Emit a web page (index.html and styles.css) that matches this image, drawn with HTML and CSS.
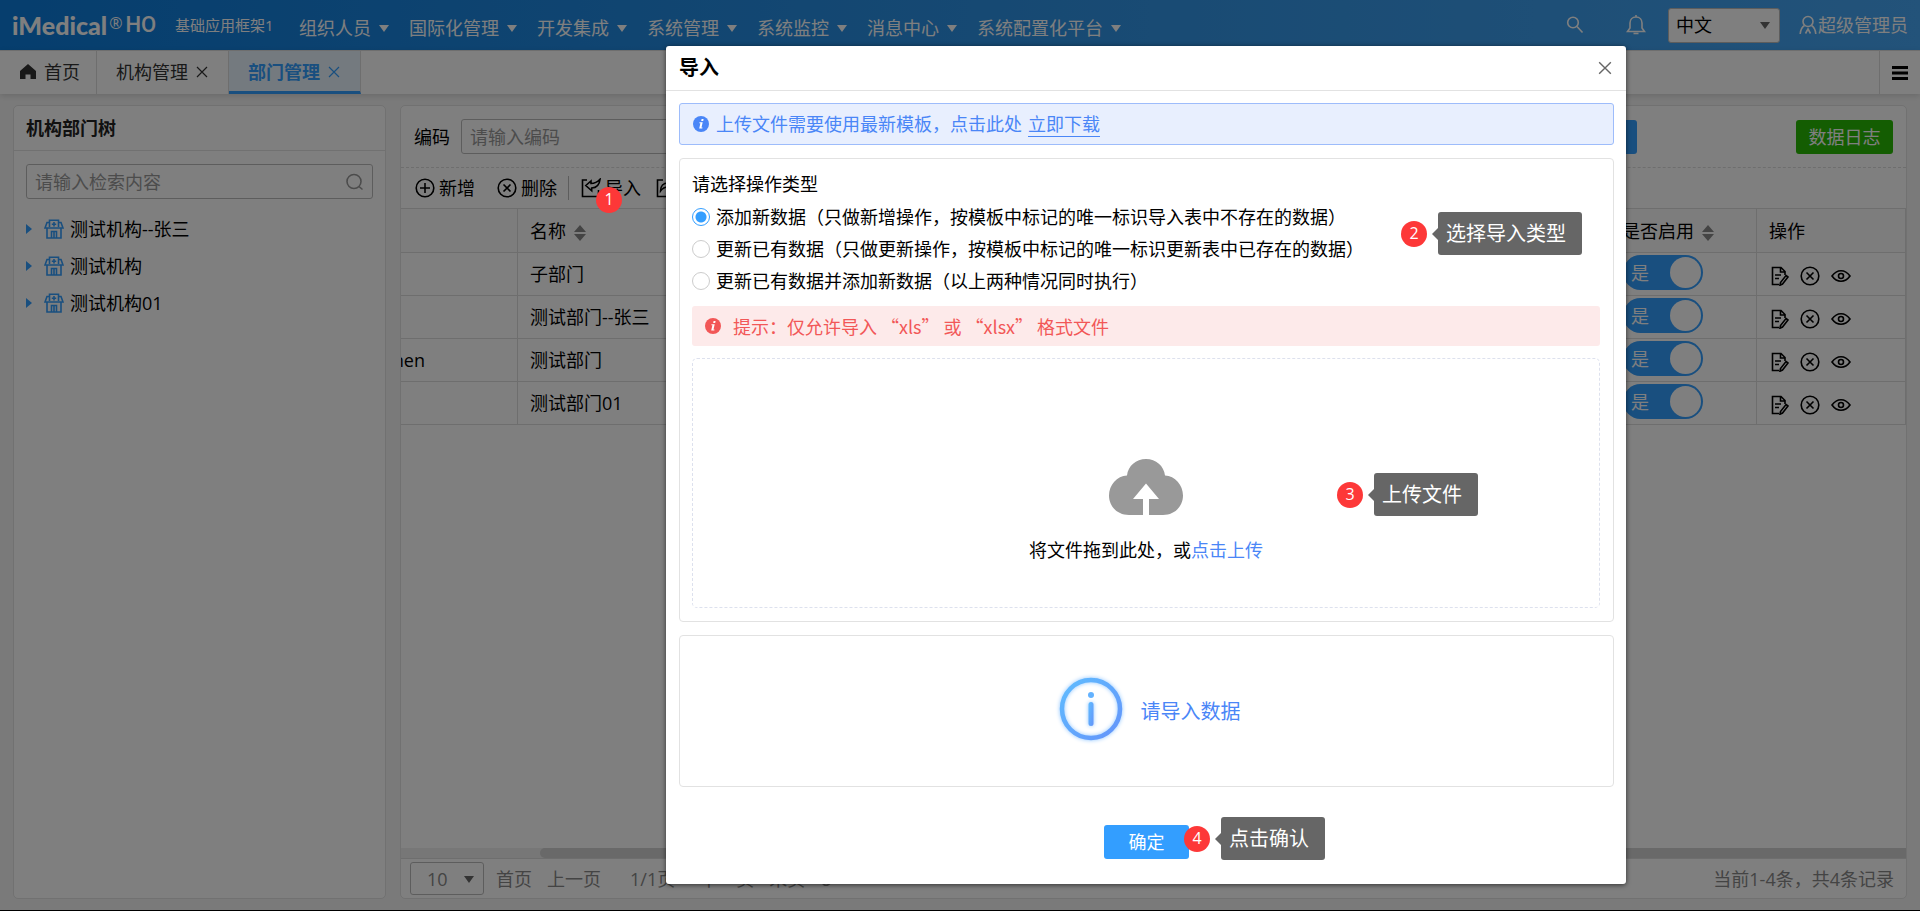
FILE: index.html
```html
<!DOCTYPE html>
<html lang="zh-CN">
<head>
<meta charset="utf-8">
<title>部门管理</title>
<link rel="stylesheet" href="styles.css">
</head>
<body>
<svg class="sprite" aria-hidden="true">
  <symbol id="i-plus" viewBox="0 0 20 20"><circle cx="10" cy="10" r="8.8"/><path d="M10 5v10M5 10h10"/></symbol>
  <symbol id="i-cancel" viewBox="0 0 20 20"><circle cx="10" cy="10" r="8.8"/><path d="M6.5 6.5l7 7M13.5 6.5l-7 7"/></symbol>
  <symbol id="i-import" viewBox="0 0 20 20"><path d="M6 2H1.500v16.500H17.500V12"/><path d="M4.800 7.500L10 3v2.500c3.500 0 6.300-1.200 9-4.200-.5 5-3.500 8.400-8.300 8.700v2.800z"/></symbol>
  <symbol id="i-export" viewBox="0 0 20 20"><path d="M7 2H1.500v16.500H17.500V12"/><path d="M4.500 13c0-5 3-8 7.500-8V1.500L18.500 7 12 12V9c-3 0-5.500 1.200-7.500 4z"/></symbol>
  <symbol id="i-edit" viewBox="0 0 18 20"><path d="M8 18.500H1.500V1.500h8.500l4 4v3.500M9.500 1.500V6H14M4 9h6M4 12.500h4"/><path d="M15 9.500l2 1.500-5.500 7-2.500 1.200.5-2.700z"/></symbol>
  <symbol id="i-eye" viewBox="0 0 20 20"><path d="M1 10c5-7 13-7 18 0-5 7-13 7-18 0z"/><circle cx="10" cy="10" r="2.500"/></symbol>
  <symbol id="i-org" viewBox="0 0 20 20"><path d="M5.500 8V1.200h9V8M5.500 3.500H3L1 9h18l-2-5.500h-2.500M3 9v10h14V9M7.500 19v-6.500h5V19M10 12.500V19M10 3v4.500M7.800 5.200h4.400"/></symbol>
  <symbol id="i-close" viewBox="0 0 12 12"><path d="M1 1l10 10M11 1L1 11"/></symbol>
  <symbol id="i-sort" viewBox="0 0 12 16"><path d="M6 0l6 7H0zM6 16l6-7H0z"/></symbol>
  <symbol id="i-info" viewBox="0 0 16 16"><circle cx="8" cy="8" r="8"/><path class="mark" d="M8.600 3h2l-.4 1.900h-2zM6.500 6.300h3.200l-1.200 5.200h1l-.2 1H6.200l1.200-5.200h-1.100z"/></symbol>
</svg>

<header class="topbar">
  <div class="brand"><span class="logo">iMedical</span><sup class="reg">®</sup><span class="ho">HO</span></div>
  <span class="framework">基础应用框架1</span>
  <nav class="menu">
    <a href="#">组织人员</a><a href="#">国际化管理</a><a href="#">开发集成</a><a href="#">系统管理</a><a href="#">系统监控</a><a href="#">消息中心</a><a href="#">系统配置化平台</a>
  </nav>
  <div class="tools">
    <button class="plain" aria-label="搜索"><svg class="line" width="18" height="18" viewBox="0 0 18 18"><circle cx="7" cy="6.500" r="5.300"/><path d="M11 10.500l5.500 6"/></svg></button>
    <button class="plain bell" aria-label="通知"><svg class="line" width="20" height="22" viewBox="0 0 20 22"><path d="M1.500 17.500h17L16 14V9c0-3.500-2.300-6-6-6s-6 2.500-6 6v5zM10 3V1M7.500 19.500h5"/></svg></button>
    <span class="picker lang"><select aria-label="语言"><option>中文</option></select></span>
    <a class="user" href="#"><svg class="line" width="18" height="20" viewBox="0 0 18 20"><circle cx="9" cy="6.500" r="5"/><path d="M5.500 10.500C3 12 1.500 15 1.200 19M12.500 10.500c2.500 1.500 4 4.500 4.300 8.500M6.500 18.500L9 14l2.500 4.500"/></svg>超级管理员</a>
  </div>
</header>

<nav class="tabs">
  <a class="tab home" href="#"><svg width="16" height="15" viewBox="0 0 16 15"><path d="M8 0l8 7v8h-5.500v-4.500h-5V15H0V7z"/></svg>首页</a>
  <a class="tab" href="#">机构管理<svg class="line" width="12" height="12"><use href="#i-close"/></svg></a>
  <a class="tab active" href="#">部门管理<svg class="line" width="12" height="12"><use href="#i-close"/></svg></a>
  <button class="plain tabs-menu" aria-label="菜单"><svg width="16" height="14" viewBox="0 0 16 14"><path d="M0 0h16v3H0zM0 5.500h16v3H0zM0 11h16v3H0z"/></svg></button>
</nav>

<main class="content">
  <aside class="panel side">
    <h2>机构部门树</h2>
    <div class="search">
      <input type="text" placeholder="请输入检索内容" aria-label="检索内容">
      <svg class="line" width="18" height="18" viewBox="0 0 18 18"><circle cx="8" cy="8.500" r="7"/><path d="M13 13.500l3.500 3"/></svg>
    </div>
    <ul class="tree">
      <li><svg class="line" width="20" height="20"><use href="#i-org"/></svg>测试机构--张三</li>
      <li><svg class="line" width="20" height="20"><use href="#i-org"/></svg>测试机构</li>
      <li><svg class="line" width="20" height="20"><use href="#i-org"/></svg>测试机构01</li>
    </ul>
  </aside>

  <section class="panel main">
    <form class="filter">
      <label for="code">编码</label>
      <input id="code" type="text" placeholder="请输入编码">
      <button type="button" class="btn query">查询</button>
      <button type="button" class="btn log">数据日志</button>
    </form>
    <div class="toolbar">
      <button class="plain"><svg class="line" width="20" height="20"><use href="#i-plus"/></svg>新增</button>
      <button class="plain"><svg class="line" width="20" height="20"><use href="#i-cancel"/></svg>删除</button>
      <button class="plain split"><svg class="line" width="20" height="20"><use href="#i-import"/></svg>导入</button>
      <button class="plain"><svg class="line" width="20" height="20"><use href="#i-export"/></svg>导出</button>
    </div>
    <table class="grid">
      <colgroup><col class="c-code"><col><col class="c-on"><col class="c-ops"></colgroup>
      <thead><tr><th></th><th>名称<svg class="sort" width="12" height="16"><use href="#i-sort"/></svg></th><th>是否启用<svg class="sort" width="12" height="16"><use href="#i-sort"/></svg></th><th>操作</th></tr></thead>
      <tbody>
        <tr><td></td><td>子部门</td><td><label class="switch"><input type="checkbox" checked><span>是</span></label></td><td class="ops"><button class="plain" aria-label="编辑"><svg class="line" width="18" height="20"><use href="#i-edit"/></svg></button><button class="plain" aria-label="删除"><svg class="line" width="20" height="20"><use href="#i-cancel"/></svg></button><button class="plain" aria-label="查看"><svg class="line" width="20" height="20"><use href="#i-eye"/></svg></button></td></tr>
        <tr><td></td><td>测试部门--张三</td><td><label class="switch"><input type="checkbox" checked><span>是</span></label></td><td class="ops"><button class="plain" aria-label="编辑"><svg class="line" width="18" height="20"><use href="#i-edit"/></svg></button><button class="plain" aria-label="删除"><svg class="line" width="20" height="20"><use href="#i-cancel"/></svg></button><button class="plain" aria-label="查看"><svg class="line" width="20" height="20"><use href="#i-eye"/></svg></button></td></tr>
        <tr><td><div class="tail">men</div></td><td>测试部门</td><td><label class="switch"><input type="checkbox" checked><span>是</span></label></td><td class="ops"><button class="plain" aria-label="编辑"><svg class="line" width="18" height="20"><use href="#i-edit"/></svg></button><button class="plain" aria-label="删除"><svg class="line" width="20" height="20"><use href="#i-cancel"/></svg></button><button class="plain" aria-label="查看"><svg class="line" width="20" height="20"><use href="#i-eye"/></svg></button></td></tr>
        <tr><td></td><td>测试部门01</td><td><label class="switch"><input type="checkbox" checked><span>是</span></label></td><td class="ops"><button class="plain" aria-label="编辑"><svg class="line" width="18" height="20"><use href="#i-edit"/></svg></button><button class="plain" aria-label="删除"><svg class="line" width="20" height="20"><use href="#i-cancel"/></svg></button><button class="plain" aria-label="查看"><svg class="line" width="20" height="20"><use href="#i-eye"/></svg></button></td></tr>
      </tbody>
    </table>
    <div class="scrollbar"><div class="thumb"></div></div>
    <footer class="pager">
      <span class="picker size"><select aria-label="每页条数"><option>10</option></select></span>
      <button class="plain">首页</button>
      <button class="plain">上一页</button>
      <span class="count">1/1页</span>
      <button class="plain">下一页</button>
      <button class="plain">末页</button>
      <button class="plain" aria-label="刷新"><svg class="line" width="12" height="16" viewBox="0 0 12 16"><path d="M10.500 6A5 5.500 0 1 0 11 10M11 2v4H7.500"/></svg></button>
      <span class="total">当前1-4条，共4条记录</span>
    </footer>
  </section>
</main>

<div class="mask"></div>
<span class="badge step-1">1</span>

<div class="modal" role="dialog" aria-labelledby="dlg-title">
  <div class="modal-head">
    <h1 id="dlg-title">导入</h1>
    <button class="plain" aria-label="关闭"><svg class="line" width="14" height="14"><use href="#i-close"/></svg></button>
  </div>
  <div class="modal-body">
    <div class="notice"><svg class="info" width="16" height="16"><use href="#i-info"/></svg><span>上传文件需要使用最新模板，点击此处</span><a href="#">立即下载</a></div>
    <div class="box">
      <fieldset class="types">
        <legend>请选择操作类型</legend>
        <label><input type="radio" name="mode" checked>添加新数据（只做新增操作，按模板中标记的唯一标识导入表中不存在的数据）</label>
        <label><input type="radio" name="mode">更新已有数据（只做更新操作，按模板中标记的唯一标识更新表中已存在的数据）</label>
        <label><input type="radio" name="mode">更新已有数据并添加新数据（以上两种情况同时执行）</label>
      </fieldset>
      <div class="warning"><svg class="info" width="16" height="16"><use href="#i-info"/></svg>提示：仅允许导入 “xls” 或 “xlsx” 格式文件</div>
      <div class="drop">
        <svg width="74" height="56" viewBox="0 0 74 56"><path fill="#999" d="M20 56C8 56 0 47 0 36.500 0 26 8 17 18 16.500 19 7 27 0 37 0s18 7 19 16.500C66 17 74 26 74 36.500 74 47 66 56 54 56H40V40h10L37 24.500 24 40h10v16z"/></svg>
        <p>将文件拖到此处，或<a href="#">点击上传</a></p>
      </div>
    </div>
    <div class="box result">
      <svg width="72" height="72" viewBox="0 0 72 72">
        <defs><linearGradient id="g" x1="0" y1="0" x2="1" y2="1"><stop offset="0" stop-color="#5fbcff"/><stop offset="1" stop-color="#6494fa"/></linearGradient></defs>
        <circle class="ring" cx="36" cy="36" r="29" fill="none" stroke="url(#g)" stroke-width="4.500"/>
        <circle cx="36" cy="22" r="3" fill="#63b2ff"/><rect class="ring" x="33.500" y="29" width="5" height="24" rx="2.500" fill="url(#g)"/>
      </svg>
      <span>请导入数据</span>
    </div>
    <div class="actions"><button class="btn confirm">确定</button></div>
  </div>
  <div class="step step-2"><span class="badge">2</span><span class="tip">选择导入类型</span></div>
  <div class="step step-3"><span class="badge">3</span><span class="tip">上传文件</span></div>
  <div class="step step-4"><span class="badge">4</span><span class="tip">点击确认</span></div>
</div>
</body>
</html>
```
FILE: styles.css
```css
* { box-sizing: border-box; }
body {
  margin: 0;
  min-height: 100vh;
  display: flex;
  flex-direction: column;
  position: relative;
  background: #f5f5f5;
  border-bottom: 1px solid #000;
  color: #000;
  font: 18px/24px "Open Sans", "Noto Sans CJK SC", sans-serif;
}
h1, h2, p, ul, fieldset { margin: 0; padding: 0; }
a { color: inherit; text-decoration: none; }
button, input, select { font: inherit; color: inherit; }
svg { display: block; flex: none; fill: currentColor; }
.line { fill: none; stroke: currentColor; stroke-width: 1.6; }
.sprite { position: absolute; width: 0; height: 0; }
.plain { border: 0; padding: 0; background: none; display: flex; align-items: center; gap: 4px; white-space: nowrap; }
.btn { border: 0; border-radius: 3px; height: 34px; color: #fff; white-space: nowrap; }

.topbar {
  height: 50px;
  display: flex;
  align-items: center;
  padding: 0 12px;
  color: #fff;
  background: linear-gradient(to right, #0c7cdc, #3296e8 60%, #46a6f4);
  white-space: nowrap;
}
.brand { display: flex; align-items: center; width: 163px; height: 48px; }
.logo { font: 900 25px/28px "Lato", sans-serif; }
.reg { font-size: 16px; line-height: 16px; padding: 0 3px 4px 2px; }
.ho { font: 500 22px/28px "Roboto", sans-serif; }
.framework { font-size: 15px; width: 124px; }
.menu { display: flex; gap: 20px; padding-top: 6px; }
.menu a { display: flex; align-items: center; gap: 8px; }
.menu a::after { content: ""; border: 5px solid transparent; border-top: 7px solid #fff; border-bottom: 0; }
.tools { display: flex; align-items: center; margin-left: auto; }
.bell { margin: 0 22px 0 42px; }
.picker { position: relative; display: inline-flex; }
.picker select { appearance: none; width: 100%; border: 1px solid #bbb; border-radius: 3px; background: #fff; }
.picker::after { content: ""; position: absolute; right: 10px; top: 14px; border: 5px solid transparent; border-top: 7px solid #666; border-bottom: 0; pointer-events: none; }
.lang { width: 112px; height: 35px; margin-right: 19px; color: #000; }
.lang select { padding: 0 7px; }
.user { display: flex; align-items: center; gap: 1px; }

.tabs { height: 44px; display: flex; align-items: stretch; background: #fff; border-top: 1px solid #ddd; box-shadow: 0 2px 6px #0002; color: #333; }
.tab { display: flex; align-items: center; gap: 8px; padding: 0 20px 2px 19px; border-right: 1px solid #ddd; }
.home { padding: 0 16px 2px 20px; }
.active { padding: 2px 20px 0 19px; border-bottom: 3px solid #339eff; background: #e9f5ff; color: #339eff; font-weight: bold; }
.tab .line { stroke-width: 1.2; }
.tabs-menu { margin-left: auto; padding: 0 12px; border-left: 1px solid #ddd; color: #000; }

.content { flex: 1; display: flex; gap: 14px; padding: 11px 13px 11px 13px; }
.panel { background: #fff; border: 1px solid #e2e2e2; border-radius: 5px; overflow: hidden; display: flex; flex-direction: column; }
.side { width: 373px; flex: none; }
.side h2 { height: 45px; padding: 10px 12px; border-bottom: 1px solid #e2e2e2; font-size: 18px; line-height: 24px; color: #222; }
.search { margin: 13px 12px 11px; height: 35px; padding: 0 8px; display: flex; align-items: center; border: 1px solid #bbb; border-radius: 3px; color: #999; }
.search input { flex: 1; min-width: 0; border: 0; padding: 0; background: none; outline: 0; }
::placeholder { color: #999; opacity: 1; }
.tree { list-style: none; padding: 0 12px; }
.tree li { display: flex; align-items: center; gap: 6px; height: 37px; }
.tree li::before { content: ""; border: 5px solid transparent; border-left: 6px solid #339eff; border-right: 0; margin-right: 6px; }
.tree li::before { width: 0; }
.tree svg { color: #339eff; }

.main { flex: 1; min-width: 0; }
.filter { display: flex; align-items: center; height: 62px; padding: 0 13px; border-bottom: 1px dashed #ddd; }
.filter label { margin-right: 11px; }
.filter input { width: 220px; height: 35px; padding: 0 8px; border: 1px solid #bbb; border-radius: 3px; }
.query { width: 80px; margin: 0 159px 0 auto; background: #339eff; }
.log { width: 97px; background: #28ba05; }
.toolbar { display: flex; align-items: center; gap: 22px; height: 40px; padding: 0 14px; }
.split { border-left: 1px solid #bbb; padding-left: 12px; margin: 0 -7px 0 -11px; }
.grid { width: 100%; table-layout: fixed; border-spacing: 0; border-top: 1px solid #ddd; }
.grid th, .grid td { height: 43px; padding: 0 12px; font-weight: normal; text-align: left; border-right: 1px solid #ddd; border-bottom: 1px solid #ddd; white-space: nowrap; }
.grid th { height: 44px; background: #fafafa; }
.c-code { width: 117px; }
.c-on { width: 147px; }
.c-ops { width: 149px; }
.sort { display: inline-block; vertical-align: -3px; margin-left: 8px; color: #888; }
.tail { width: 24px; margin-left: -12px; display: flex; justify-content: flex-end; overflow: hidden; }
.switch { display: flex; align-items: center; width: 80px; height: 35px; padding: 2px; margin: 0 0 3px 1px; border-radius: 18px; background: #339eff; color: #fff; }
.switch input { appearance: none; order: 2; width: 31px; height: 31px; margin: 0; border-radius: 50%; background: #fff; }
.switch span { flex: 1; padding-left: 6px; }
.grid .ops { padding-left: 14px; }
.grid .ops > button { display: inline-flex; vertical-align: middle; margin-right: 11px; }
.scrollbar { height: 10px; margin-top: auto; background: #eee; }
.thumb { height: 10px; margin-left: 139px; border-radius: 5px 0 0 5px; background: #d2d2d2; }
.pager { display: flex; align-items: center; height: 40px; padding: 0 12px 0 9px; border-top: 1px solid #ddd; color: #888; gap: 15px; }
.size { width: 74px; height: 33px; margin-right: -3px; }
.size select { padding: 0 16px; }
.count { margin: 0 10px 0 14px; }
.total { margin-left: auto; }

.mask { position: absolute; inset: 0; background: #00000080; }
.modal { position: absolute; left: 666px; top: 46px; width: 960px; border-radius: 3px; background: #fff; box-shadow: 0 1px 5px #0009; }
.modal-head { display: flex; align-items: center; justify-content: space-between; height: 45px; padding: 0 14px 0 13px; border-bottom: 1px solid #e2e2e2; }
.modal-head h1 { font-size: 20px; line-height: 28px; }
.modal-head button { color: #666; }
.modal-head .line { stroke-width: 1.2; }
.modal-body { padding: 12px 12px 25px 13px; }
.notice { display: flex; align-items: center; height: 42px; padding: 0 13px; border: 1px solid #9dbcfb; border-radius: 3px; background: #e8effe; color: #4a86f7; }
.notice a { margin-left: 6px; border-bottom: 1px solid #4a86f7; }
.info { margin-right: 7px; }
.mark { fill: #fff; }
.box { margin-top: 13px; padding: 13px 13px 13px 12px; border: 1px solid #e2e2e2; border-radius: 4px; }
.types { border: 0; }
.types legend { padding: 0; margin-bottom: 5px; }
.types label { display: flex; align-items: center; height: 32px; white-space: nowrap; }
.types input { appearance: none; width: 18px; height: 18px; margin: 0 6px 0 0; border: 1px solid #ccc; border-radius: 50%; background: #fff; }
.types input:checked { border-color: #339eff; background: radial-gradient(#339eff 5px, #fff 6px); }
.warning { display: flex; align-items: center; height: 40px; margin: 9px 0 12px; padding: 0 13px; border-radius: 3px; background: #fdeaea; color: #f25757; font-family: "Noto Sans CJK SC", sans-serif; white-space: pre; }
.warning .info { margin-right: 12px; }
.drop { display: flex; flex-direction: column; align-items: center; gap: 23px; height: 250px; padding-top: 100px; border: 1px dashed #dde1ee; border-radius: 5px; }
.drop a { color: #4a86f7; }
.result { display: flex; align-items: center; justify-content: center; gap: 14px; height: 152px; padding: 0 0 4px 2px; color: #4a86f7; font-size: 20px; }
.result span { padding-top: 6px; }
.ring { filter: drop-shadow(0 0 2px #8cc4ff); }
.actions { display: flex; justify-content: center; margin-top: 38px; }
.confirm { width: 85px; background: #339eff; }

.badge { display: block; flex: none; width: 26px; height: 26px; border-radius: 50%; background: #fd3838; color: #fff; font-size: 16px; line-height: 24px; text-align: center; }
.step-1 { position: absolute; left: 596px; top: 187px; }
.step { position: absolute; display: flex; align-items: center; gap: 11px; }
.step-2 { left: 735px; top: 166px; }
.step-3 { left: 671px; top: 427px; }
.step-4 { left: 518px; top: 771px; }
.tip { position: relative; height: 43px; padding: 0 16px 0 8px; border-radius: 3px; background: #666; color: #fff; font-size: 20px; line-height: 43px; white-space: nowrap; }
.tip::before { content: ""; position: absolute; left: -6px; top: 16px; border: 6px solid transparent; border-right-color: #666; border-left: 0; }
```
